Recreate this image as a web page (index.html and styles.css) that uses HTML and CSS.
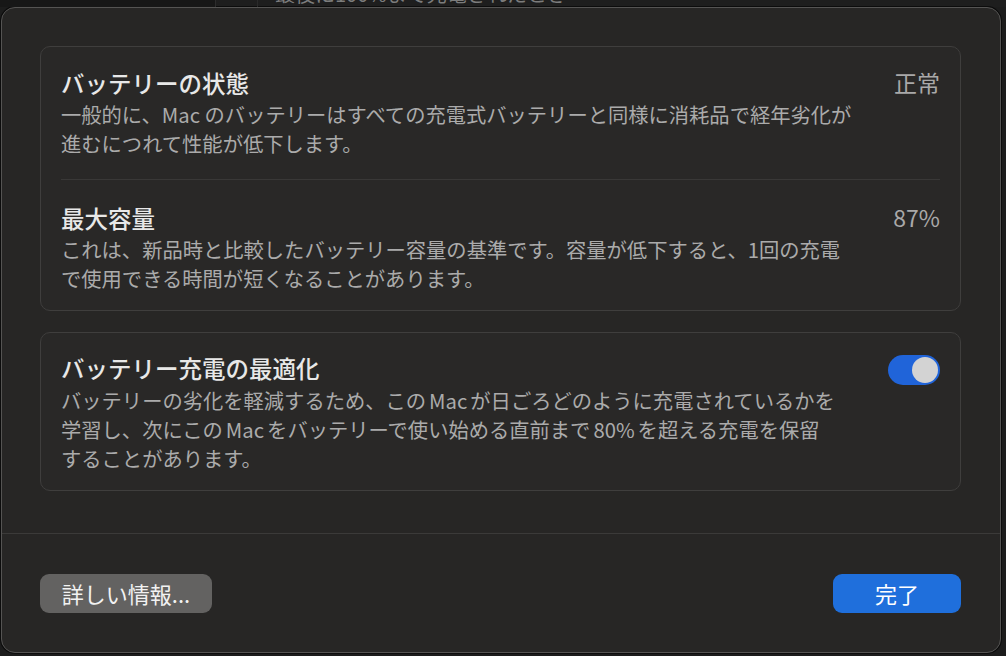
FILE: index.html
```html
<!DOCTYPE html>
<html lang="ja">
<head>
<meta charset="utf-8">
<title>バッテリーの状態</title>
<link rel="stylesheet" href="styles.css">
</head>
<body>
<div class="behind">
  <div class="behind-side"></div>
  <div class="behind-gap"></div>
  <div class="behind-text">最後に100%まで充電されたとき</div>
</div>
<div class="dialog">
  <div class="content">
    <section class="card">
      <div class="row">
        <div class="text">
          <div class="title">バッテリーの状態</div>
          <div class="desc">一般的に、Mac のバッテリーはすべての充電式バッテリーと同様に消耗品で経年劣化が<br>進むにつれて性能が低下します。</div>
        </div>
        <div class="value">正常</div>
      </div>
      <div class="row row-sep">
        <div class="text">
          <div class="title">最大容量</div>
          <div class="desc">これは、新品時と比較したバッテリー容量の基準です。容量が低下すると、1回の充電<br>で使用できる時間が短くなることがあります。</div>
        </div>
        <div class="value">87%</div>
      </div>
    </section>
    <section class="card">
      <div class="row row-toggle">
        <div class="text">
          <div class="title">バッテリー充電の最適化</div>
          <div class="desc desc-spaced">バッテリーの劣化を軽減するため、この<span class="lat">Mac</span>が日ごろどのように充電されているかを<br>学習し、次にこの<span class="lat">Mac</span>をバッテリーで使い始める直前まで<span class="lat">80%</span>を超える充電を保留<br>することがあります。</div>
        </div>
        <div class="toggle"><div class="knob"></div></div>
      </div>
    </section>
  </div>
  <div class="footer">
    <button class="btn btn-gray">詳しい情報...</button>
    <button class="btn btn-blue">完了</button>
  </div>
</div>
</body>
</html>
```
FILE: styles.css
```css
* { box-sizing: border-box; }
html, body { margin: 0; padding: 0; }
body {
  background: #1c1c1c;
  width: 1006px;
  height: 656px;
  overflow: hidden;
  font-family: "Noto Sans CJK JP", "Noto Sans", sans-serif;
  color: #e6e6e6;
}
.behind {
  height: 7px;
  overflow: hidden;
  display: flex;
  background: #1e1e1e;
}
.behind-side {
  width: 216px;
  background: #171717;
  border-right: 1px solid #2c2c2c;
}
.behind-gap {
  width: 42px;
  border-right: 1px solid #2a2a2a;
}
.behind-text {
  margin-left: 17px;
  margin-top: -16px;
  font-size: 20px;
  line-height: 20px;
  color: #7c7c7c;
  white-space: nowrap;
}
.dialog {
  margin-left: 1px;
  width: 1000px;
  height: 646px;
  border: 1px solid #555453;
  border-radius: 14px;
  background: #272625;
  box-shadow: 0 0 0 1px #0c0c0c;
  display: flex;
  flex-direction: column;
}
.content {
  padding: 38px 39px 42px 38px;
  display: flex;
  flex-direction: column;
  gap: 21px;
  border-bottom: 1px solid #3b3a39;
}
.card {
  border: 1px solid #3f3e3d;
  border-radius: 10px;
  background: #292827;
  padding: 0 20px;
}
.row {
  display: flex;
  justify-content: space-between;
  align-items: flex-start;
  padding: 20px 0 20px;
}
.row-sep {
  border-top: 1px solid #393837;
  padding-top: 22px;
  padding-bottom: 16px;
}
.row-toggle {
  padding-top: 19px;
  padding-bottom: 16px;
}
.title {
  font-size: 23.5px;
  line-height: 32px;
  margin-bottom: 1px;
  font-weight: 500;
  color: #e8e8e8;
}
.desc {
  font-size: 20.3px;
  line-height: 29.4px;
  color: #ababab;
  white-space: nowrap;
}
.desc-spaced { margin-top: 2px; }
.lat { margin: 0 3px; }
.value {
  font-size: 23px;
  line-height: 31px;
  color: #a9a9a9;
}
.toggle {
  margin-top: 3px;
  width: 52px;
  height: 30px;
  border-radius: 15px;
  background: #2064d9;
  display: flex;
  justify-content: flex-end;
  align-items: center;
  padding: 2px;
}
.knob {
  width: 26px;
  height: 26px;
  border-radius: 50%;
  background: #d3d3d3;
}
.footer {
  flex: 1;
  display: flex;
  justify-content: space-between;
  align-items: flex-start;
  padding: 40px 39px 0 38px;
}
.btn {
  font-family: "Noto Sans CJK JP", "Noto Sans", sans-serif;
  font-size: 22px;
  height: 39px;
  border: none;
  border-radius: 9px;
  color: #f2f2f2;
  padding: 0;
  line-height: 39px;
}
.btn-gray {
  width: 172px;
  background: #636261;
}
.btn-blue {
  width: 128px;
  background: #1f6fdc;
  color: #ffffff;
}
```
